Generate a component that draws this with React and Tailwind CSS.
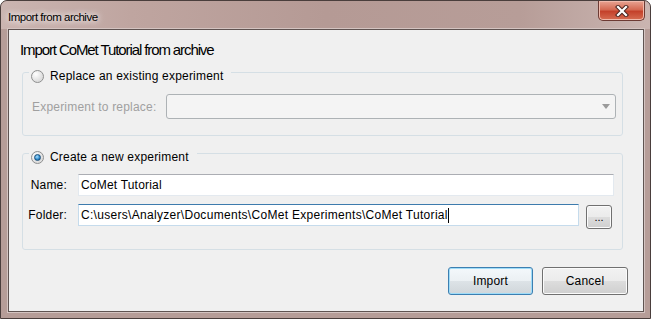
import React from "react";

const Radio = ({ checked }) => (
  <span className="w-[13px] h-[13px] rounded-full border border-[#8e8f8f] bg-[radial-gradient(circle_at_35%_30%,#ffffff,#dcdcdc_70%,#f2f2f2)] flex items-center justify-center shrink-0">
    {checked && (
      <span className="w-[7px] h-[7px] rounded-full border border-[#1b4f7a] bg-[radial-gradient(circle_at_40%_35%,#a8e0ff,#2a86c8_60%,#114a78)]" />
    )}
  </span>
);

const Legend = ({ checked, children }) => (
  <div className="-mt-[5px] ml-[6px] h-[16px] w-fit flex items-center gap-[6px] pl-[2px] pr-[8px] bg-[#f0f0f0]">
    <Radio checked={checked} />
    <span>{children}</span>
  </div>
);

const Button = ({ children, isDefault }) => (
  <button
    className={
      isDefault
        ? "w-[85px] h-[28px] rounded-[3px] border border-[#3c7fb1] shadow-[inset_0_0_0_1px_#9fdcf8] bg-[linear-gradient(#f3f8fb,#ebf0f3_50%,#dde3e7_50%,#d0d6da)] text-black"
        : "w-[86px] h-[28px] rounded-[3px] border border-[#707070] shadow-[inset_0_0_0_1px_#fbfbfb] bg-[linear-gradient(#f2f2f2,#ebebeb_50%,#dddddd_50%,#cfcfcf)] text-black"
    }
  >
    {children}
  </button>
);

export default function App() {
  return (
    <div className="w-[651px] h-[319px] flex flex-col border border-[#4a3e3c] rounded-t-[7px] bg-[#b69d98] font-['Liberation_Sans',Arial,sans-serif] text-[12px] tracking-[0.2px] text-black overflow-hidden">
      {/* title bar */}
      <div className="h-[28px] flex items-start justify-between bg-[linear-gradient(to_right,#cbb5b1,#bfa5a0_20%,#b59a95_50%,#b79d98_80%,#cab5b1)] rounded-t-[6px]">
        <span className="mt-[9px] ml-[7px] text-[11.5px] leading-[14px] tracking-[-0.5px] [text-shadow:0_0_8px_#fff,0_0_6px_#fff]">
          Import from archive
        </span>
        <div className="mr-[5px] w-[47px] h-[20px] rounded-b-[5px] border border-t-0 border-[#6d3a33] bg-[linear-gradient(#e8a493,#d46a53_45%,#c4412b_55%,#d66d52)] shadow-[inset_0_0_0_1px_#f0b9ab] flex items-center justify-center">
          <svg width="14" height="12" viewBox="0 0 14 12">
            <path d="M3 2 L11 10 M11 2 L3 10" stroke="#4b2620" strokeWidth="4.2" strokeLinecap="square" />
            <path d="M3 2 L11 10 M11 2 L3 10" stroke="#ffffff" strokeWidth="2.2" strokeLinecap="square" />
          </svg>
        </div>
      </div>

      {/* client area */}
      <div className="flex-1 ml-[7px] mr-[6px] mb-[6px] border border-[#5f5351] shadow-[0_0_0_1px_#d4c4c1] bg-[#f0f0f0] flex flex-col">
        <h1 className="mt-[10px] ml-[11px] text-[15px] leading-[20px] tracking-[-1.1px]">
          Import CoMet Tutorial from archive
        </h1>

        {/* replace group */}
        <div className="mt-[12px] ml-[13px] w-[601px] border border-[#d5dfe5] rounded-[3px] pb-[16px]">
          <Legend>Replace an existing experiment</Legend>
          <div className="mt-[10px] pl-[9px] flex items-center">
            <span className="w-[134px] text-[#a0a0a0]">Experiment to replace:</span>
            <div className="w-[450px] h-[25px] rounded-[3px] border border-[#adb2b5] bg-[#f4f4f4] flex items-center justify-end pr-[5px]">
              <svg width="8" height="5" viewBox="0 0 8 5">
                <path d="M0 0 H8 L4 5 Z" fill="#9a9a9a" />
              </svg>
            </div>
          </div>
        </div>

        {/* create group */}
        <div className="mt-[17px] ml-[13px] w-[601px] border border-[#d5dfe5] rounded-[3px] pb-[20px]">
          <Legend checked>Create a new experiment</Legend>
          <div className="mt-[9px] flex items-center">
            <span className="w-[44px] text-right">Name:</span>
            <div className="ml-[11px] w-[536px] h-[22px] border border-[#e3e9ef] border-t-[#abadb3] bg-white flex items-center pl-[2px]">
              CoMet Tutorial
            </div>
          </div>
          <div className="mt-[8px] flex items-start">
            <span className="w-[44px] h-[22px] flex items-center justify-end">Folder:</span>
            <div className="ml-[11px] w-[501px] h-[22px] border border-[#c5dbec] border-t-[#3d7bad] bg-white flex items-center pl-[2px] tracking-[0.3px]">
              C:\users\Analyzer\Documents\CoMet Experiments\CoMet Tutorial
              <span className="inline-block w-[1px] h-[15px] bg-black" />
            </div>
            <button className="mt-[1px] ml-[7px] w-[26px] h-[24px] rounded-[3px] border border-[#707070] shadow-[inset_0_0_0_1px_#fbfbfb] bg-[linear-gradient(#f2f2f2,#ebebeb_50%,#dddddd_50%,#cfcfcf)] flex items-end justify-center pb-[5px] text-[11px] leading-[11px] tracking-normal">
              ...
            </button>
          </div>
        </div>

        {/* buttons */}
        <div className="mt-[17px] mr-[15px] flex justify-end gap-[9px]">
          <Button isDefault>Import</Button>
          <Button>Cancel</Button>
        </div>
      </div>
    </div>
  );
}
